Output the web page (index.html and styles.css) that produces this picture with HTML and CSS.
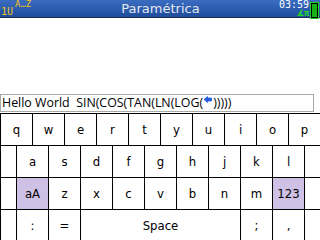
FILE: index.html
```html
<!DOCTYPE html>
<html lang="es">
<head>
  <meta charset="UTF-8" />
  <title>Paramétrica</title>
  <link rel="stylesheet" href="styles.css">
</head>
<body>
  <!-- Barra superior -->
  <div class="topbar">
    <div class="status-left">
      <span class="mode-az">A…Z</span>
      <span class="mode-user">1U</span>
    </div>
    <div class="title">Paramétrica</div>
    <div class="status-right">
      <div class="clock-box">
        <span class="clock">03:59</span>
        <span class="angle">∡π</span>
      </div>
      <div class="battery"><span></span></div>
    </div>
  </div>

  <div class="screen">
    <div class="entry">
      Hello World&nbsp; SIN(COS(TAN(LN(LOG(<svg class="cursor" width="8" height="7" viewBox="0 0 8 7"><path d="M0 3.5 L3.5 0.5 V2 H7.5 V5 H3.5 V6.5 Z" fill="#2a5de0" stroke="#2a5de0" stroke-width="0.8" stroke-linejoin="round"/></svg>)))))
    </div>
  </div>

  <!-- Teclado -->
  <div class="keyboard">
    <div class="key">q</div><div class="key">w</div><div class="key">e</div><div class="key">r</div><div class="key">t</div>
    <div class="key">y</div><div class="key">u</div><div class="key">i</div><div class="key">o</div><div class="key">p</div>

    <div class="pad"></div>
    <div class="key">a</div><div class="key">s</div><div class="key">d</div><div class="key">f</div><div class="key">g</div>
    <div class="key">h</div><div class="key">j</div><div class="key">k</div><div class="key">l</div>
    <div class="pad"></div>

    <div class="pad"></div>
    <div class="key on">aA</div><div class="key">z</div><div class="key">x</div><div class="key">c</div><div class="key">v</div>
    <div class="key">b</div><div class="key">n</div><div class="key">m</div><div class="key on">123</div>
    <div class="pad"></div>

    <div class="pad"></div>
    <div class="key">:</div><div class="key">=</div><div class="key space">Space</div><div class="key">;</div><div class="key">,</div>
    <div class="pad"></div>
  </div>
</body>
</html>
```

FILE: styles.css
```css
body {
  margin: 0;
  width: 320px;
  height: 240px;
  overflow: hidden;
  background: #fff;
  font-family: 'DejaVu Sans', sans-serif;
}
.topbar {
  height: 17px;
  background: linear-gradient(#3a6cc0, #1f4d9c);
  border-bottom: 1px solid #1a2a4a;
  display: flex;
  align-items: stretch;
  position: relative;
}
.status-left {
  width: 40px;
  position: relative;
  color: #f0c020;
  font-family: 'DejaVu Sans Mono', monospace;
}
.mode-az {
  position: absolute;
  left: 15px;
  top: -1px;
  font-size: 9px;
}
.mode-user {
  position: absolute;
  left: 1px;
  top: 6px;
  font-size: 10px;
}
.title {
  flex: 1;
  text-align: center;
  color: #e4e8ee;
  font-size: 13px;
  line-height: 17px;
  padding-left: 2px;
}
.status-right {
  display: flex;
  align-items: flex-start;
  gap: 1px;
}
.clock-box {
  display: flex;
  flex-direction: column;
  align-items: flex-end;
  font-family: 'DejaVu Sans Mono', monospace;
}
.clock {
  color: #fff;
  font-size: 10px;
  line-height: 10px;
}
.angle {
  color: #20e020;
  font-size: 8px;
  line-height: 7px;
  font-weight: bold;
}
.battery {
  width: 5px;
  height: 13px;
  margin-top: 2px;
  margin-right: 1px;
  border: 1px solid #20d020;
  background: #000;
  padding: 1px;
  box-sizing: content-box;
  display: flex;
}
.battery span {
  flex: 1;
  background: #18b018;
}
.screen {
  height: 94px;
  display: flex;
  flex-direction: column;
  justify-content: flex-end;
}
.entry {
  width: 311px;
  height: 16px;
  border: 1px solid #a8a8a8;
  font-family: 'Open Sans', sans-serif;
  font-size: 12.4px;
  line-height: 16px;
  padding-left: 1px;
  color: #000;
  white-space: nowrap;
  box-sizing: content-box;
}
.cursor {
  vertical-align: 4px;
  margin: 0 1px;
}
.keyboard {
  margin-top: 1px;
  display: grid;
  grid-template-columns: repeat(20, 16px);
  grid-auto-rows: 32px;
}
.key, .pad {
  border-left: 1px solid #000;
  border-top: 1px solid #000;
}
.key {
  grid-column: span 2;
  display: flex;
  align-items: center;
  justify-content: center;
  font-size: 13px;
  color: #000;
  font-family: 'DejaVu Sans Condensed', 'DejaVu Sans', sans-serif;
}
.key.on {
  background: #cfc0e6;
}
.key.space {
  grid-column: span 10;
}
```
